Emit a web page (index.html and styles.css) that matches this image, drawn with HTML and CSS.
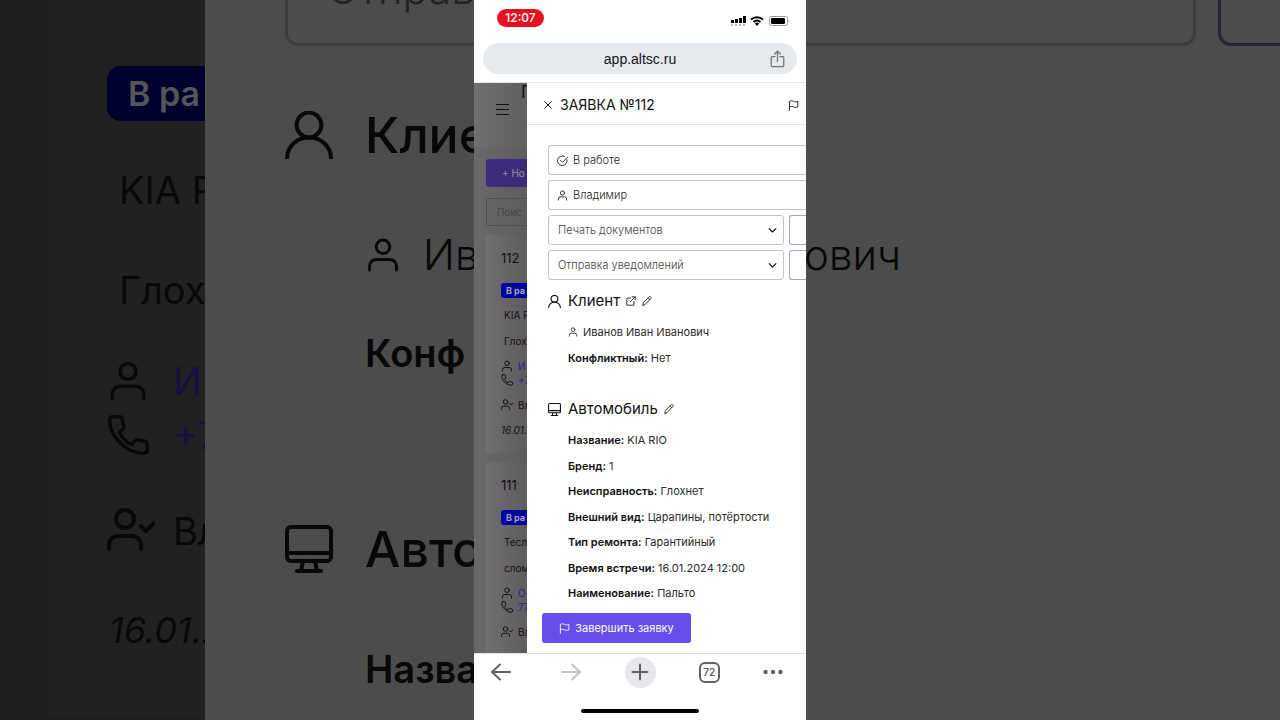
FILE: index.html
```html
<!DOCTYPE html>
<html lang="ru">
<head>
<meta charset="utf-8">
<meta name="viewport" content="width=device-width, initial-scale=1">
<title>Заявка №112</title>
<link rel="stylesheet" href="styles.css">
</head>
<body>
<svg class="sprite" aria-hidden="true">
  <symbol id="person" viewBox="0 0 24 24"><circle cx="12" cy="6.5" r="4.5"/><path d="M3 22v-2.5a4.5 4.5 0 0 1 4.5-4.5h9a4.5 4.5 0 0 1 4.5 4.5V22"/></symbol>
  <symbol id="client" viewBox="0 0 24 24"><circle cx="12" cy="7" r="6.2"/><path d="M1 23.500a11 10.300 0 0 1 22 0"/></symbol>
  <symbol id="phone" viewBox="0 0 24 24"><path d="M3 1.500h4c1 0 1.500.5 1.700 1.500l.8 4c.2 1 0 1.500-.8 2l-1.500 1.500c1 3 4 6 7 7l1.500-1.800c.7-.8 1.300-1 2.300-.8l3.500.7c1 .2 1.500.9 1.500 1.900v3c0 1.500-1 2-2.500 2C10.500 22 2 13 1.500 4c0-1.500.5-2.500 1.500-2.500z"/></symbol>
  <symbol id="person-check" viewBox="0 0 24 24"><circle cx="9" cy="6" r="4.500"/><path d="M1 21v-2a4.500 4.500 0 0 1 4.500-4.500h7A4.500 4.500 0 0 1 17 19v2M17 9.500l2.500 2.500L23.500 8"/></symbol>
  <symbol id="monitor" viewBox="0 0 24 24"><rect x="1" y="1" width="22" height="17" rx="2"/><path d="M1 14h22M9 18l-1 5M15 18l1 5M6 23h12"/></symbol>
  <symbol id="flag" viewBox="0 0 24 24"><path d="M3 23V3c3-1.500 6-1.500 9 0s6 1.500 9.500 0v12c-3.500 1.500-6.500 1.500-9.500 0s-6-1.500-9 0"/></symbol>
  <symbol id="check" viewBox="0 0 24 24"><path d="M22 10.500A10.500 10.500 0 1 1 16.500 3M7 11l5 5L23 5"/></symbol>
  <symbol id="pencil" viewBox="0 0 24 24"><path d="M2 22l1.500-6.500L17 2c1.500-1.500 3-1 4 0s1.500 2.500 0 4L8 20zM15 5l4 4"/></symbol>
  <symbol id="external" viewBox="0 0 24 24"><path d="M11 5H2v17h17v-9M15 2h7v7M22 2L10 14"/></symbol>
  <symbol id="chevron" viewBox="0 0 24 24"><path d="M3 7l9 9 9-9"/></symbol>
  <symbol id="close" viewBox="0 0 24 24"><path d="M2 2l20 20M22 2L2 22"/></symbol>
</svg>

<div class="backdrop" aria-hidden="true">
  <div class="zoom-list">
    <div class="zoom-card">
      <span class="zoom-badge">В ра</span>
      <p class="zoom-text">KIA R</p>
      <p class="zoom-text">Глох</p>
      <p class="zoom-row zoom-contact"><svg class="icon icon-42"><use href="#person"/></svg><span>И</span></p>
      <p class="zoom-row zoom-tel"><svg class="icon icon-42"><use href="#phone"/></svg><span>+7</span></p>
      <p class="zoom-row zoom-master"><svg class="icon icon-48"><use href="#person-check"/></svg><span>Вл</span></p>
      <p class="zoom-date">16.01.2</p>
    </div>
  </div>
  <div class="zoom-panel">
    <div class="zoom-fields">
      <div class="zoom-field">Отправ</div>
      <div class="zoom-field zoom-field-accent"></div>
    </div>
    <div class="zoom-heading"><svg class="icon icon-48"><use href="#client"/></svg>Клие</div>
    <div class="zoom-line zoom-name"><svg class="icon icon-36"><use href="#person"/></svg>Иванов Иван Иванович</div>
    <div class="zoom-line zoom-conflict"><b>Конф</b></div>
    <div class="zoom-heading zoom-heading-car"><svg class="icon icon-48"><use href="#monitor"/></svg>Авто</div>
    <div class="zoom-line zoom-title"><b>Назва</b></div>
  </div>
</div>

<div class="phone">
  <header class="browser-top">
    <div class="status">
      <span class="clock">12:07</span>
      <svg class="status-icons" viewBox="0 0 60 14" aria-hidden="true">
        <path d="M1 6h3v3H1zM5 5h3v4H5zM9 4h3v5H9zM13 2h3v7h-3z"/>
        <path class="dim" d="M1 10h2v2H1zM5 10h2v2H5zM9 10h2v2H9zM13 10h2v2h-2z"/>
        <path class="arc" d="M21 5.500a9 9 0 0 1 12 0M23.500 8a5.500 5.500 0 0 1 7 0"/>
        <path d="M24.800 9.500L27 12l2.200-2.500a3.500 3.500 0 0 0-4.400 0z"/>
        <rect class="battery" x="39.500" y="2.500" width="18" height="9" rx="2"/>
        <rect x="41" y="4" width="14" height="6" rx="1"/>
        <path class="dim" d="M58.500 5.500c1.500.5 1.500 2.500 0 3z"/>
      </svg>
    </div>
    <div class="address">
      <span class="host">app.altsc.ru</span>
      <button class="plain share" aria-label="Поделиться"><svg class="icon share-icon" viewBox="0 0 24 28"><path d="M8 10H3.500A1.500 1.500 0 0 0 2 11.500v13A1.500 1.500 0 0 0 3.500 26h17a1.500 1.500 0 0 0 1.500-1.500v-13a1.500 1.500 0 0 0-1.500-1.500H16M12 18V2M7.500 6L12 1.500 16.500 6"/></svg></button>
    </div>
  </header>

  <main class="view">
    <section class="list">
      <div class="list-head">
        <button class="plain menu" aria-label="Меню"><span></span><span></span><span></span></button>
        <h1 class="list-title">П</h1>
      </div>
      <button class="new">+ Но</button>
      <input class="search" type="text" placeholder="Поис" aria-label="Поиск">
      <article class="card">
        <h2 class="number">112</h2>
        <span class="badge">В ра</span>
        <p class="text">KIA R</p>
        <p class="text">Глох</p>
        <p class="contact"><svg class="icon icon-12"><use href="#person"/></svg><a href="#">И</a></p>
        <p class="contact"><svg class="icon icon-12"><use href="#phone"/></svg><a href="#">+7</a></p>
        <p class="contact master"><svg class="icon icon-12"><use href="#person-check"/></svg>Вл</p>
        <p class="date">16.01.2</p>
      </article>
      <article class="card">
        <h2 class="number">111</h2>
        <span class="badge">В ра</span>
        <p class="text">Тесл</p>
        <p class="text">слом</p>
        <p class="contact"><svg class="icon icon-12"><use href="#person"/></svg><a href="#">О</a></p>
        <p class="contact"><svg class="icon icon-12"><use href="#phone"/></svg><a href="#">77</a></p>
        <p class="contact master"><svg class="icon icon-12"><use href="#person-check"/></svg>Вл</p>
      </article>
    </section>

    <section class="panel">
      <header class="panel-head">
        <button class="plain" aria-label="Закрыть"><svg class="icon icon-8"><use href="#close"/></svg></button>
        <h2 class="panel-title">ЗАЯВКА №112</h2>
        <button class="plain flag" aria-label="Отметить"><svg class="icon icon-11"><use href="#flag"/></svg></button>
      </header>
      <div class="panel-body">
        <div class="fields">
          <button class="field field-wide"><svg class="icon icon-11"><use href="#check"/></svg>В работе</button>
          <button class="field field-wide"><svg class="icon icon-11"><use href="#person"/></svg>Владимир</button>
          <div class="field-row">
            <div class="select-box"><select class="field select" aria-label="Печать документов"><option>Печать документов</option></select><svg class="icon icon-9 arrow"><use href="#chevron"/></svg></div>
            <button class="field field-action" aria-label="Печать"></button>
          </div>
          <div class="field-row">
            <div class="select-box"><select class="field select" aria-label="Отправка уведомлений"><option>Отправка уведомлений</option></select><svg class="icon icon-9 arrow"><use href="#chevron"/></svg></div>
            <button class="field field-action" aria-label="Отправить"></button>
          </div>
        </div>
        <div class="heading">
          <svg class="icon icon-13"><use href="#client"/></svg>
          <h3>Клиент</h3>
          <button class="plain" aria-label="Открыть клиента"><svg class="icon icon-10"><use href="#external"/></svg></button>
          <button class="plain" aria-label="Изменить клиента"><svg class="icon icon-10"><use href="#pencil"/></svg></button>
        </div>
        <div class="details client-details">
          <p class="name"><svg class="icon icon-10"><use href="#person"/></svg>Иванов Иван Иванович</p>
          <p><b>Конфликтный:</b> Нет</p>
        </div>
        <div class="heading">
          <svg class="icon icon-13"><use href="#monitor"/></svg>
          <h3>Автомобиль</h3>
          <button class="plain edit-car" aria-label="Изменить автомобиль"><svg class="icon icon-10"><use href="#pencil"/></svg></button>
        </div>
        <div class="details car-details">
          <p><b>Название:</b> KIA RIO</p>
          <p><b>Бренд:</b> 1</p>
          <p><b>Неисправность:</b> Глохнет</p>
          <p><b>Внешний вид:</b> Царапины, потёртости</p>
          <p><b>Тип ремонта:</b> Гарантийный</p>
          <p><b>Время встречи:</b> 16.01.2024 12:00</p>
          <p><b>Наименование:</b> Пальто</p>
        </div>
      </div>
      <footer class="panel-foot">
        <button class="finish"><svg class="icon icon-11"><use href="#flag"/></svg>Завершить заявку</button>
      </footer>
    </section>
  </main>

  <footer class="browser-bottom">
    <nav class="toolbar">
      <button class="plain back" aria-label="Назад"><svg class="icon nav-icon" viewBox="0 0 20 20"><path d="M19 10H1M9 2.500L1 10l8 7.500"/></svg></button>
      <button class="plain disabled" aria-label="Вперёд"><svg class="icon nav-icon" viewBox="0 0 20 20"><path d="M1 10h18M11 2.500l8 7.500-8 7.500"/></svg></button>
      <button class="plain add" aria-label="Новая вкладка"><svg class="icon nav-icon" viewBox="0 0 20 20"><path d="M2.500 10h15M10 2.500v15"/></svg></button>
      <button class="plain tabs">72</button>
      <button class="plain" aria-label="Ещё"><svg class="nav-icon dots" viewBox="0 0 20 20"><circle cx="2.500" cy="10" r="2.200"/><circle cx="10" cy="10" r="2.200"/><circle cx="17.500" cy="10" r="2.200"/></svg></button>
    </nav>
    <div class="home-bar"></div>
  </footer>
</div>
</body>
</html>
```

FILE: styles.css
```css
* { box-sizing: border-box; }
body { margin: 0; height: 100vh; overflow: hidden; position: relative; background: #1e1e1e; font-family: Inter, "Noto Sans", sans-serif; color: #111; }
h1, h2, h3, p { margin: 0; font-weight: 400; }
button, input, select { font-family: inherit; }
.sprite { position: absolute; width: 0; height: 0; }
.icon { flex: none; fill: none; stroke: currentColor; stroke-width: 2; stroke-linecap: round; stroke-linejoin: round; overflow: visible; display: block; }
.icon-8 { width: 8px; height: 8px; stroke-width: 3; }
.icon-9 { width: 9px; height: 9px; }
.icon-10 { width: 10px; height: 10px; }
.icon-11 { width: 11px; height: 11px; }
.icon-12 { width: 12px; height: 12px; }
.icon-13 { width: 13px; height: 13px; }
.icon-36 { width: 36px; height: 36px; }
.icon-42 { width: 42px; height: 42px; }
.icon-48 { width: 48px; height: 48px; }
.plain { border: 0; padding: 0; background: none; color: inherit; display: flex; align-items: center; justify-content: center; }

/* enlarged, dimmed copy of the app behind the phone */
.backdrop { position: absolute; inset: 0; display: flex; overflow: hidden; color: #080808; font-size: 42px; font-weight: 300; white-space: nowrap; }
.zoom-list { flex: 0 0 205px; padding-left: 47px; overflow: hidden; font-size: 38px; }
.zoom-card { height: 718px; padding: 66px 0 0 60px; background: #212122; }
.zoom-badge { display: block; width: 180px; height: 55px; padding-left: 21px; border-radius: 14px; background: #00002c; color: #55555c; font-size: 34px; font-weight: 600; line-height: 55px; margin-bottom: 19px; }
.zoom-text { padding-left: 12px; line-height: 100px; }
.zoom-row { display: flex; align-items: center; gap: 24px; line-height: 54px; }
.zoom-contact { margin-top: 14px; }
.zoom-contact span, .zoom-tel span { color: #15103f; }
.zoom-master { margin-top: 42px; gap: 18px; }
.zoom-date { margin-top: 45px; line-height: 54px; font-size: 36px; font-style: italic; padding-left: 2px; }
.zoom-panel { flex: 1; min-width: 0; background: #4c4c4c; padding-left: 80px; overflow: hidden; }
.zoom-fields { display: flex; gap: 22px; margin-top: -68px; }
.zoom-field { flex: 0 0 911px; height: 114px; padding-left: 39px; border: 3px solid #3d3d3f; border-radius: 13px; color: #222; line-height: 108px; }
.zoom-field-accent { border-color: #27233f; flex-basis: 160px; }
.zoom-heading { display: flex; align-items: center; gap: 32px; margin-top: 59px; line-height: 60px; font-size: 50px; font-weight: 500; }
.zoom-line { display: flex; align-items: center; gap: 22px; padding-left: 80px; line-height: 60px; }
.zoom-line b { font-size: 38px; font-weight: 600; }
.zoom-name { margin-top: 60px; }
.zoom-conflict { margin-top: 38px; }
.zoom-heading-car { margin-top: 136px; }
.zoom-title { margin-top: 60px; }

.phone { position: relative; width: 332px; height: 100%; margin: 0 auto; background: #fff; display: flex; flex-direction: column; overflow: hidden; }
.browser-top { padding: 0 9px 8px; border-bottom: 1px solid #e4e4e6; }
.status { display: flex; align-items: center; justify-content: space-between; height: 36px; padding: 0 7px 0 14px; }
.clock { width: 47px; border-radius: 9px; background: #e8101f; color: #fff; font-size: 12px; font-weight: 500; line-height: 18px; text-align: center; }
.status-icons { width: 60px; height: 14px; margin-top: 5px; }
.status-icons .dim { fill: #b8b8b8; }
.status-icons .arc { fill: none; stroke: #000; stroke-width: 2; }
.status-icons .battery { fill: none; stroke: #999; }
.address { display: flex; align-items: center; height: 31px; margin-top: 7px; padding: 0 12px 0 27px; border-radius: 16px; background: #e6e9ee; }
.host { flex: 1; text-align: center; font-family: "Liberation Sans", Arial, sans-serif; font-size: 14px; color: #151515; }
.share { color: #6f747b; width: 15px; }
.share-icon { width: 15px; height: 18px; }

.view { flex: 1; min-height: 0; display: flex; overflow: hidden; }
.list { flex: 0 0 53px; padding-left: 12px; overflow: hidden; background: linear-gradient(90deg, #6a686a, #5e5c5e); white-space: nowrap; font-size: 11px; font-weight: 300; }
.list-head { display: flex; align-items: flex-start; height: 64px; margin-left: -12px; padding-left: 22px; background: linear-gradient(90deg, #706e70, #615f61); }
.menu { flex: 0 0 13px; flex-direction: column; gap: 3px; margin-top: 21px; }
.menu span { width: 13px; height: 1px; margin-bottom: 1px; background: #111; }
.list-title { margin-left: 12px; font-size: 17px; line-height: 18px; }
.new { display: block; width: 120px; height: 28px; margin-top: 12px; padding: 0 0 0 16px; border: 0; border-radius: 3px; background: #3c2b7c; color: #99929f; font-size: 10px; text-align: left; }
.search { display: block; width: 120px; height: 28px; margin-top: 11px; padding: 0 10px; border: 1px solid #514f52; border-radius: 3px; background: transparent; font-size: 10px; }
.search::placeholder { color: #454346; }
.card { width: 200px; height: 218px; margin: 9px 0 0; padding: 13px 0 0 15px; border-radius: 4px; background: linear-gradient(90deg, #716e71, #5f5c5f 40px); }
.number { font-size: 13px; line-height: 20px; }
.badge { display: block; width: 60px; height: 15px; margin: 15px 0 4px; padding-left: 5px; border-radius: 3px; background: #0303a3; color: #a5a5b0; font-size: 9px; font-weight: 700; line-height: 15px; }
.text { padding-left: 3px; font-size: 10px; line-height: 26px; }
.contact { display: flex; align-items: center; gap: 5px; font-size: 10px; line-height: 14px; }
.text + .contact { margin-top: 5px; }
.contact a { color: #2c1e82; text-decoration: none; }
.contact.master { margin-top: 11px; }
.date { margin-top: 11px; font-size: 10px; line-height: 14px; font-style: italic; }

.panel { flex: 1; min-width: 0; display: flex; flex-direction: column; background: #fff; white-space: nowrap; overflow: hidden; }
.panel-head { display: flex; align-items: center; height: 42px; padding: 3px 7px 0 17px; border-bottom: 1px solid #e4e4e6; }
.panel-title { flex: 1; margin-left: 8px; font-size: 14px; line-height: 20px; }
.panel-body { flex: 1; min-height: 0; display: flex; flex-direction: column; padding: 20px 0 10px 21px; }
.fields { display: flex; flex-direction: column; gap: 5px; }
.field { display: flex; align-items: center; gap: 5px; width: 100%; height: 30px; padding: 0 9px; border: 1px solid #c2c2c8; border-radius: 3px; background: #fff; color: #222; font-size: 11px; font-weight: 300; text-align: left; }
.field-wide { border-right: 0; border-radius: 3px 0 0 3px; padding-left: 8px; }
.field-row { display: flex; gap: 5px; }
.select-box { position: relative; flex: 0 0 236px; }
.select { appearance: none; color: #444; }
.arrow { position: absolute; right: 7px; top: 11px; color: #111; stroke-width: 3; pointer-events: none; }
.field-action { flex: 1; min-width: 0; border-right: 0; border-color: #a9a2c4; border-radius: 3px 0 0 3px; }
.heading { display: flex; align-items: center; gap: 6px; height: 20px; }
.heading h3 { margin-left: 1px; font-size: 15px; line-height: 20px; }
.fields + .heading { margin-top: 11px; }
.details { padding-left: 20px; color: #2a2a2a; font-size: 11px; font-weight: 300; line-height: 20px; }
.details b { color: #111; font-weight: 600; }
.client-details { display: flex; flex-direction: column; gap: 6px; margin: 11px 0 31px; }
.name { display: flex; align-items: center; gap: 5px; }
.car-details { flex: 1; display: flex; flex-direction: column; justify-content: space-between; margin-top: 11px; }
.panel-foot { padding: 0 0 10px 15px; }
.finish { display: flex; align-items: center; justify-content: center; gap: 5px; width: 149px; height: 30px; padding: 0; border: 0; border-radius: 3px; background: #684ded; color: #fff; font-size: 11px; font-weight: 400; }

.browser-bottom { flex: none; height: 67px; border-top: 1px solid #dedee0; background: #fff; color: #606266; }
.toolbar { display: flex; align-items: center; justify-content: space-between; height: 36px; padding: 0 23px 0 17px; }
.nav-icon { width: 20px; height: 20px; stroke-width: 2; }
.back { margin-right: 7px; }
.disabled { color: #c2c3c6; }
.add { width: 31px; height: 31px; border-radius: 50%; background: #e7e8eb; }
.tabs { width: 21px; height: 21px; border: 2px solid #606266; border-radius: 6px; font-size: 10px; font-weight: 600; }
.dots { fill: #606266; display: block; }
.home-bar { width: 118px; height: 4px; margin: 19px auto 0; border-radius: 2px; background: #000; }
```
